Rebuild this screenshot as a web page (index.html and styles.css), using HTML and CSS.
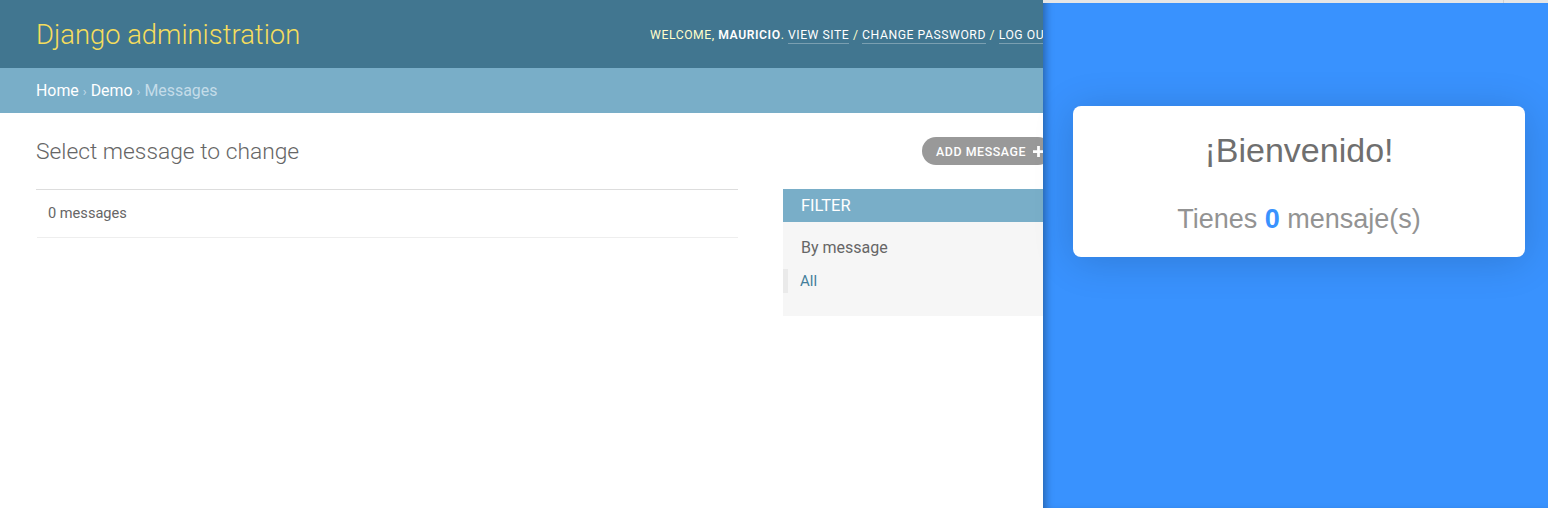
FILE: index.html
```html
<!DOCTYPE html>
<html lang="es">
<head>
<meta charset="utf-8">
<title>Select message to change | Django site admin</title>
<link rel="stylesheet" href="styles.css">
</head>
<body>
<div class="django">
  <header class="header">
    <div class="branding">Django administration</div>
    <div class="user-tools">
      Welcome, <strong>Mauricio</strong>.
      <a href="#">View site</a> /
      <a href="#">Change password</a> /
      <a href="#">Log out</a>
    </div>
  </header>
  <nav class="breadcrumbs">
    <a href="#">Home</a><span class="sep">›</span><a href="#">Demo</a><span class="sep">›</span><span class="current">Messages</span>
  </nav>
  <main class="content">
    <div class="toolbar">
      <h1 class="title">Select message to change</h1>
      <a class="addlink" href="#">Add message
        <svg class="plus" viewBox="0 0 12 12" width="11" height="11"><path d="M4.5 0h3v4.5H12v3H7.5V12h-3V7.5H0v-3h4.5z" fill="#fff"/></svg>
      </a>
    </div>
    <div class="changelist">
      <div class="results">
        <p class="paginator">0 messages</p>
      </div>
      <aside class="filter">
        <h2 class="filter-title">Filter</h2>
        <h3 class="filter-sub">By message</h3>
        <ul class="filter-list">
          <li class="selected"><a href="#">All</a></li>
        </ul>
      </aside>
    </div>
  </main>
</div>

<section class="panel">
  <div class="panel-strip"><span class="strip-tick"></span></div>
  <div class="card">
    <h1 class="card-title">¡Bienvenido!</h1>
    <p class="card-text">Tienes <span class="count">0</span> mensaje(s)</p>
  </div>
</section>
</body>
</html>
```

FILE: styles.css
```css
* { box-sizing: border-box; }

html, body {
  margin: 0;
  padding: 0;
}

body {
  width: 1548px;
  height: 508px;
  overflow: hidden;
  position: relative;
  background: #fff;
  font-family: Roboto, "Liberation Sans", sans-serif;
  color: #333;
}

a { text-decoration: none; }

.django {
  width: 1092px;
}

/* Header */
.header {
  height: 68px;
  background: #417690;
  display: flex;
  align-items: center;
  justify-content: space-between;
  padding: 0 40px 0 36px;
}

.branding {
  font-size: 27.4px;
  font-weight: 300;
  color: #f5dd5d;
  line-height: 32px;
  margin-top: 2px;
}

.user-tools {
  font-size: 12.2px;
  letter-spacing: 0.55px;
  text-transform: uppercase;
  color: #ffc;
  white-space: nowrap;
  line-height: 14px;
  margin-top: 2px;
}

.user-tools strong {
  font-weight: 600;
  color: #fff;
}

.user-tools a {
  color: #fff;
  border-bottom: 1px solid rgba(255, 255, 255, 0.3);
  padding-bottom: 1px;
}

/* Breadcrumbs */
.breadcrumbs {
  height: 45px;
  background: #79aec8;
  padding: 0 36px;
  font-size: 15.9px;
  line-height: 45px;
  color: #c4dce8;
}

.breadcrumbs a { color: #fff; }

.breadcrumbs .sep {
  color: #c4dce8;
  padding: 0 4px;
  font-size: 13px;
}

.breadcrumbs .current { color: #c4dce8; }

/* Content */
.content {
  padding: 24px 40px 0 36px;
}

.toolbar {
  height: 28px;
  display: flex;
  align-items: center;
  justify-content: space-between;
}

.title {
  margin: 0;
  font-size: 22.8px;
  font-weight: 300;
  color: #666;
  line-height: 27px;
}

.addlink {
  height: 28px;
  display: flex;
  align-items: center;
  gap: 7px;
  padding: 0 8px 0 14px;
  border-radius: 15px;
  background: #999;
  color: #fff;
  font-size: 12.4px;
  font-weight: 500;
  letter-spacing: 0.55px;
  text-transform: uppercase;
}

.changelist {
  margin-top: 24px;
  display: flex;
  align-items: flex-start;
  gap: 45px;
}

.results {
  flex: 1;
  border-top: 1px solid #ddd;
  padding-left: 1px;
}

.paginator {
  margin: 0;
  height: 48px;
  line-height: 47px;
  padding-left: 11px;
  font-size: 14.6px;
  color: #666;
  border-bottom: 1px solid #eee;
}

.filter {
  width: 269px;
  background: #f6f6f6;
  height: 127px;
}

.filter-title {
  margin: 0;
  height: 33px;
  background: #79aec8;
  color: #fff;
  font-size: 16.5px;
  font-weight: 400;
  line-height: 34px;
  padding-left: 18px;
  text-transform: uppercase;
}

.filter-sub {
  margin: 0;
  padding: 16px 0 0 18px;
  font-size: 16px;
  font-weight: 400;
  color: #666;
  line-height: 19px;
}

.filter-list {
  list-style: none;
  margin: 12px 0 0;
  padding: 0;
}

.filter-list li {
  height: 24px;
  line-height: 24px;
  padding-left: 12px;
  font-size: 15px;
  border-left: 5px solid transparent;
}

.filter-list li.selected { border-left-color: #eaeaea; }

.filter-list a { color: #447e9b; }

/* Overlay panel */
.panel {
  position: absolute;
  top: 0;
  left: 1043px;
  right: 0;
  bottom: 0;
  background: #3992fe;
  box-shadow: inset 7px 0 8px -5px rgba(0, 0, 0, 0.35);
  font-family: "Liberation Sans", Arial, sans-serif;
}

.panel-strip {
  height: 3px;
  background: #e6e6e6;
  position: relative;
}

.strip-tick {
  position: absolute;
  left: 460px;
  top: 0;
  width: 1px;
  height: 3px;
  background: #d0d0d0;
}

.card {
  margin: 103px 23px 0 30px;
  height: 151px;
  background: #fff;
  border-radius: 8px;
  box-shadow: 0 4px 40px rgba(0, 0, 0, 0.16);
  text-align: center;
  padding-top: 24px;
}

.card-title {
  margin: 0;
  font-size: 34px;
  font-weight: 400;
  line-height: 40px;
  color: #6f6f6f;
}

.card-text {
  margin: 33px 0 0;
  font-size: 27px;
  line-height: 32px;
  color: #939393;
}

.count {
  color: #3992fe;
  font-weight: 700;
}
```
